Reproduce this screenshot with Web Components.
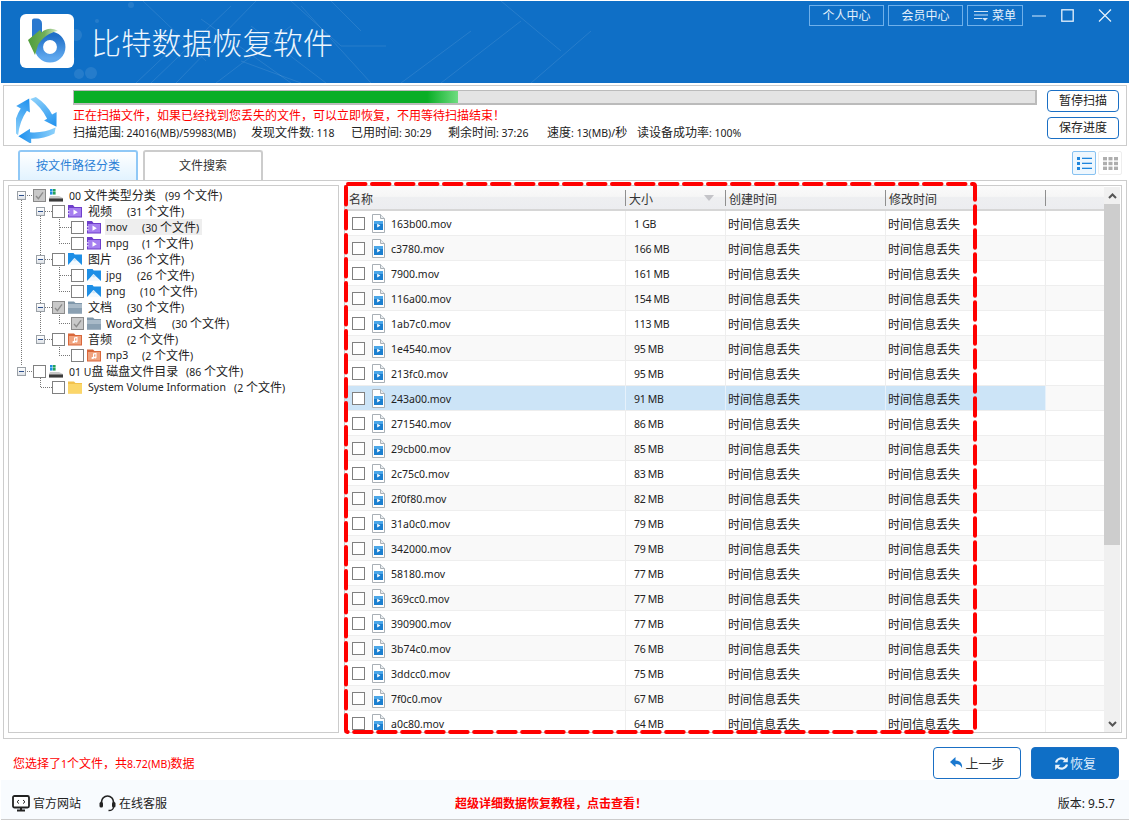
<!DOCTYPE html>
<html lang="zh">
<head>
<meta charset="utf-8">
<title>比特数据恢复软件</title>
<style>
html,body{margin:0;padding:0;background:#fff}
body{width:1130px;height:820px;overflow:hidden;font:12px/16px "Noto Sans","Noto Sans CJK SC",sans-serif;color:#222}
</style>
</head>
<body>
<bit-app></bit-app>
<script>
function def(name, html, opts){
  opts = opts || {};
  customElements.define(name, class extends HTMLElement{
    constructor(){super();this.attachShadow({mode:'open'}).innerHTML=html;}
    connectedCallback(){ if(opts.init) opts.init.call(this,this.shadowRoot); }
  });
}
const W = s => s.replace(/[\x00-\xff]+/g, m => `<span style="font-size:10.5px">${m}</span>`);
const I = {
  purple:`<svg viewBox="0 0 14 14" width="14" height="14"><path d="M0 1h5l1.5 2H14v10.5H0z" fill="#6f3fcb"/><rect x="1" y="4" width="12" height="8.5" fill="#a67ff0"/><rect x="0" y="6" width="1.6" height="1.4" fill="#d7c6f8"/><rect x="0" y="9" width="1.6" height="1.4" fill="#d7c6f8"/><path d="M5.5 5.6l4.3 2.6-4.3 2.6z" fill="#fff"/></svg>`,
  image:`<svg viewBox="0 0 14 14" width="14" height="14"><path d="M0 1h5.5l1.2 1.4H14V13H0z" fill="#1e8fe6"/><path d="M0 13l6.5-7 7.5 7z" fill="#f4fafe"/><path d="M6.5 6L9 8.7 6.6 9.6 4.6 8z" fill="#cfe6f8"/></svg>`,
  gray:`<svg viewBox="0 0 14 14" width="14" height="14"><path d="M0 1.5h6l1.5 1.5H14v10.5H0z" fill="#7f97aa"/><rect y="4" width="14" height="4" fill="#a9bac8"/><rect y="8" width="14" height="5.5" fill="#8aa0b2"/></svg>`,
  music:`<svg viewBox="0 0 14 14" width="14" height="14"><path d="M0 1.5h6L7.5 3H14v10.5H0z" fill="#d9673a"/><rect x="1" y="4" width="12" height="8.5" fill="#f0a37f"/><path d="M6 5.5l3.5-.7v4.7a1.3 1 0 1 1-1-1V6.2L7 6.5v3.6a1.3 1 0 1 1-1-1z" fill="#fff"/></svg>`,
  yellow:`<svg viewBox="0 0 14 14" width="14" height="14"><path d="M0 1.5h6L7.5 3H14v10.5H0z" fill="#f2c14c"/><rect y="4" width="14" height="9.5" fill="#fbd669"/></svg>`,
  drive:`<svg viewBox="0 0 14 14" width="14" height="14"><rect x="1" y="1" width="2.6" height="2.6" fill="#1d8fe0"/><rect x="4" y="1" width="2.6" height="2.6" fill="#25a25a"/><rect x="1" y="4" width="2.6" height="2.6" fill="#1d8fe0"/><rect x="4" y="4" width="2.6" height="2.6" fill="#25a25a"/><path d="M1 8h9l4 2v3.5H0V10z" fill="#c9c9c9"/><rect y="10.5" width="14" height="3" fill="#3b3b3b"/></svg>`,
  file:`<svg viewBox="0 0 13 19" width="13" height="19"><path d="M.5.5h8l4 4v14H.5z" fill="#fff" stroke="#a9b0b6"/><path d="M8.5.5v4h4" fill="#e8ecef" stroke="#a9b0b6"/><rect x="2" y="7" width="9" height="9" fill="#1a7fd0"/><rect x="2" y="7" width="9" height="3" fill="#4aa6e8"/><path d="M5.2 9.8l3.2 1.8-3.2 1.8z" fill="#fff"/></svg>`
};

def('check-box',`<style>
:host{display:block;width:13px;height:13px;box-sizing:border-box;border:1px solid #808080;background:#fff;flex:none;position:relative}
:host([checked]){background:#c9c9c9;border-color:#8a8a8a}
svg{display:none;position:absolute;left:0;top:0}
:host([checked]) svg{display:block}
</style><svg width="11" height="11" viewBox="0 0 11 11"><path d="M2 6l2.4 2.6L9 2.4" fill="none" stroke="#8c8c8c" stroke-width="1.4"/></svg>`);

def('tree-exp',`<style>
:host{display:block;width:9px;height:9px;box-sizing:border-box;border:1px solid #9aa0a6;background:linear-gradient(#fff,#dfe3e8);position:relative;flex:none}
i{position:absolute;left:1px;top:3px;width:5px;height:1px;background:#2c4f8c}
:host([blank]){visibility:hidden}
</style><i></i>`);

def('tree-row',`<style>
:host{display:flex;align-items:center;height:16px;white-space:nowrap}
tree-exp{margin-right:7px}
.ic{margin-left:3px;width:14px;height:14px;flex:none;display:block}
.ic svg{display:block}
.txt{display:flex;height:16px;line-height:18px;margin-left:6px}
:host([lv2]) .txt{margin-left:5px}
.name{flex:none}
:host([hl]) .txt{background:#eee;margin-left:4px;padding-left:1px;padding-right:3px}
</style><tree-exp></tree-exp><check-box></check-box><span class="ic"></span><span class="txt"><span class="name"></span><span class="cnt"></span></span>`,{init(r){
  const a=n=>this.getAttribute(n);
  this.style.paddingLeft=a('x')+'px';
  const e=r.querySelector('tree-exp');
  if(a('exp')==='none') {e.style.display='none';this.setAttribute('lv2','');}
  if(a('exp')==='blank') e.setAttribute('blank','');
  if(this.hasAttribute('checked')) r.querySelector('check-box').setAttribute('checked','');
  r.querySelector('.ic').innerHTML=I[a('icon')];
  const n=r.querySelector('.name');n.innerHTML=W(a('name'));n.style.width=a('w')+'px';
  if(/^[\x00-\xff]+$/.test(a('name'))) n.style.lineHeight='16px';
  r.querySelector('.cnt').innerHTML=W(a('cnt'));
}});

def('file-tree',`<style>
:host{display:block;position:relative;box-sizing:border-box;width:331px;height:548px;border:1px solid #ccc;padding-top:1px;background:#fff;flex:none;overflow:hidden}
svg{position:absolute;left:0;top:0;pointer-events:none}
</style>
<svg width="329" height="230"><g fill="none" stroke="#777" stroke-dasharray="1 1" shape-rendering="crispEdges" transform="translate(-9,-186)">
<path d="M21.5 200V366M27 195.5h6M27 371.5h6"/>
<path d="M40.5 216V334M45 211.5h7M45 259.5h7M45 307.5h7M45 339.5h7"/>
<path d="M59.5 217V243.5H71M59.5 227.5H71"/>
<path d="M59.5 265V291.5H71M59.5 275.5H71"/>
<path d="M59.5 313V323.5H71"/>
<path d="M59.5 345V355.5H71"/>
<path d="M40.5 376V387.5H52"/>
</g></svg>
<div id="r"></div>`,{init(r){
  const rows=[
   [8,'','drive','00 文件类型分类','(99 个文件)',96,1],
   [27,'','purple','视频','(31 个文件)',39],
   [46,'none','purple','mov','(30 个文件)',36,0,1],
   [46,'none','purple','mpg','(1 个文件)',36],
   [27,'','image','图片','(36 个文件)',39],
   [46,'none','image','jpg','(26 个文件)',31],
   [46,'none','image','png','(10 个文件)',34],
   [27,'','gray','文档','(30 个文件)',39,1],
   [46,'none','gray','Word文档','(30 个文件)',66,1],
   [27,'','music','音频','(2 个文件)',39],
   [46,'none','music','mp3','(2 个文件)',36],
   [8,'','drive','01 U盘 磁盘文件目录','(86 个文件)',117],
   [27,'blank','yellow','System Volume Information','(2 个文件)',146]
  ];
  r.getElementById('r').innerHTML=rows.map(d=>`<tree-row x="${d[1]==='none'?d[0]+16:d[0]}" exp="${d[1]}" icon="${d[2]}" name="${d[3]}" cnt="${d[4]}" w="${d[5]}"${d[6]?' checked':''}${d[7]?' hl':''}></tree-row>`).join('');
}});

const COLS='grid-template-columns:281px 100px 160px 160px 1fr';
def('file-row',`<style>
:host{display:grid;${COLS};height:25px;box-sizing:border-box;border-bottom:1px solid #eee;background:#fff;align-items:center;white-space:nowrap;flex:none}
:host([alt]){background:#f9f9f9}
:host([sel]){border-bottom-color:#eee}
div{height:24px;line-height:26px;box-sizing:border-box;border-right:1px solid #eee}
:host([sel]) div:not(.e){background:#cce4f7;border-right-color:#e6f1fb}
.n{display:flex;align-items:center;padding-left:7px}
.ic{margin-left:7px;width:13px;height:19px;display:block}
.ic svg{display:block}
.nm{margin:2px 0 0 6px;font-size:10.5px;line-height:20px}
.s{padding-left:8px;font-size:10.5px;letter-spacing:-.3px}
.t{padding-left:2px;line-height:28px}
.e{border:0}
</style><div class="n"><check-box></check-box><span class="ic"></span><span class="nm"></span></div><div class="s"></div><div class="t">时间信息丢失</div><div class="t">时间信息丢失</div><div class="e"></div>`,{init(r){
  r.querySelector('.nm').textContent=this.getAttribute('name');
  r.querySelector('.s').textContent=this.getAttribute('size');
  r.querySelector('.ic').innerHTML=I.file;
}});

def('scroll-bar',`<style>
:host{display:flex;flex-direction:column;width:16px;background:#f0f0f0;flex:none;margin:1px 1px 0 0}
.b{height:17px;display:flex;align-items:center;justify-content:center;flex:none;background:#f0f0f0}
.th{height:341px;background:#cdcdcd;flex:none}
.sp{flex:1}
</style><div class="b"><svg width="9" height="6" viewBox="0 0 9 6"><path d="M1 5l3.5-3.5L8 5" fill="none" stroke="#555" stroke-width="2"/></svg></div><div class="th"></div><div class="sp"></div><div class="b"><svg width="9" height="6" viewBox="0 0 9 6"><path d="M1 1l3.5 3.5L8 1" fill="none" stroke="#555" stroke-width="2"/></svg></div>`);

def('file-list',`<style>
:host{display:flex;box-sizing:border-box;width:778px;height:548px;border:1px solid #ccc;background:#fff;flex:none;overflow:hidden}
.m{width:759px;flex:none;display:flex;flex-direction:column;overflow:hidden}
.h{display:grid;${COLS};height:25px;box-sizing:border-box;border-bottom:2px solid #d6d6d6;background:linear-gradient(#fbfbfb 0,#f6f6f6 45%,#eeeff1 50%,#ecedf0 100%);flex:none;align-items:center}
.h span{display:block;height:16px;line-height:19px;border-right:1px solid #8f8f8f;padding-left:3px;position:relative;color:#333}
.h span.nb{padding-left:4px}
.h i{position:absolute;right:11px;top:5px;border:5px solid transparent;border-top:6px solid #c4c4c8;border-bottom:0}
</style><div class="m"><div class="h"><span class="nb">名称</span><span>大小<i></i></span><span>创建时间</span><span>修改时间</span><b></b></div><div id="b"></div></div><scroll-bar></scroll-bar>`,{init(r){
  const d='163b00 1 GB,c3780 166 MB,7900 161 MB,116a00 154 MB,1ab7c0 113 MB,1e4540 95 MB,213fc0 95 MB,243a00 91 MB,271540 86 MB,29cb00 85 MB,2c75c0 83 MB,2f0f80 82 MB,31a0c0 79 MB,342000 79 MB,58180 77 MB,369cc0 77 MB,390900 77 MB,3b74c0 76 MB,3ddcc0 75 MB,7f0c0 67 MB,a0c80 64 MB'.split(',');
  r.getElementById('b').innerHTML=d.map((s,i)=>{const k=s.indexOf(' ');return `<file-row name="${s.slice(0,k)}.mov" size="${s.slice(k+1)}"${i%2?' alt':''}${i===7?' sel':''}></file-row>`}).join('');
}});

def('main-panel',`<style>
:host{display:flex;position:relative;box-sizing:border-box;margin-left:3px;width:1124px;height:559px;border:1px solid #ccc;padding:4px 0 0 4px;gap:5px;background:#fff}
svg{position:absolute;left:-4px;top:-181px;pointer-events:none}
</style><slot></slot>
<svg width="1130" height="820"><rect x="346" y="184" width="629" height="548" rx="2" fill="none" stroke="#f00" stroke-width="4" stroke-linecap="round" stroke-dasharray="17.5 6.5"/></svg>`);

def('top-btn',`<style>
:host{display:flex;align-items:center;justify-content:center;gap:3px;box-sizing:border-box;height:21px;width:75px;border:1px solid #6fb0ea;color:#e6f2fc;font-size:12px;flex:none}
:host([w]){width:56px}
</style><slot></slot>`);

def('bit-header',`<style>
:host{display:flex;position:relative;overflow:hidden;box-sizing:border-box;margin:1px 1px 0;height:82px;background:#0f6fc6;color:#fff;padding:13px 0 0 19px}
.bg{position:absolute;left:0;top:0}
.logo{flex:none;position:relative}
h1{position:relative;margin:11px 0 0 17px;font-size:30px;line-height:36px;font-weight:300;letter-spacing:.3px;color:#eef6fd;white-space:nowrap}
.tools{position:absolute;right:0;top:4px;display:flex;gap:4px;padding-right:17px}
.ctl{display:flex;align-items:center;margin-left:5px;gap:15px}
.ctl svg{display:block}
</style>
<svg class="bg" width="1128" height="82"><g fill="#fff" opacity=".09"><circle cx="75" cy="34" r="6"/><circle cx="90" cy="72" r="6"/><circle cx="78" cy="73" r="5"/><circle cx="130" cy="4" r="3"/><circle cx="72" cy="58" r="2"/><circle cx="96" cy="20" r="2"/></g>
<g fill="none" stroke="#fff" opacity=".1"><path d="M135 82L190 30M150 82L230 5M175 82L255 0M215 82L290 25M240 60L300 82M250 25L325 82M142 0L205 60M200 18L290 82M290 0L340 45L385 45M300 5L370 82M330 0L360 30M400 82L470 30M440 82L520 20M500 0L560 50M530 82L590 30"/></g></svg>
<svg class="logo" width="54" height="54" viewBox="0 0 54 54"><defs><linearGradient id="lb" x1="0" y1="0" x2="0" y2="1"><stop offset="0" stop-color="#1f6fc8"/><stop offset="1" stop-color="#5fa8ee"/></linearGradient><linearGradient id="lg" x1="0" y1="0" x2="1" y2="0"><stop offset="0" stop-color="#4f9d3a"/><stop offset=".55" stop-color="#6fae58"/><stop offset="1" stop-color="#d6ebc9"/></linearGradient></defs>
<rect width="54" height="54" rx="6" fill="#fff"/><path d="M12 6.500a2 2 0 0 1 2-2h3a5 5 0 0 1 5 5v24H12z" fill="#2a78cf"/><circle cx="30" cy="33" r="11.200" fill="none" stroke="url(#lb)" stroke-width="8.500"/><path d="M38 17C32 13.500 26 14.500 21.500 18.500L20 16 8 26 15 41 18 31C22 24 30 18 38 17Z" fill="url(#lg)"/></svg>
<h1>比特数据恢复软件</h1>
<div class="tools"><top-btn>个人中心</top-btn><top-btn>会员中心</top-btn><top-btn w><svg width="15" height="13" viewBox="0 0 15 13"><path d="M0 2.5h14M0 6h14M0 9.5h8" stroke="#cfe4f7" stroke-width="1.2"/><path d="M8 9l3 3 3-3z" fill="#cfe4f7"/></svg>菜单</top-btn>
<div class="ctl"><svg width="14" height="12" viewBox="0 0 14 12"><path d="M0 6h14" stroke="#a9d0f2" stroke-width="1.3"/></svg><svg width="13" height="13" viewBox="0 0 13 13"><rect x=".8" y=".8" width="11.4" height="11.4" fill="none" stroke="#e8f3fc" stroke-width="1.3"/></svg><svg width="14" height="13" viewBox="0 0 14 13" style="margin-left:9px"><path d="M1 .5l12 12M13 .5l-12 12" stroke="#e8f3fc" stroke-width="1.2"/></svg></div></div>`);

def('side-btn',`<style>
:host{display:block;box-sizing:border-box;width:72px;height:22px;border:1px solid #1a6fc4;border-radius:4px;text-align:center;line-height:20px;font-size:12px;color:#222;background:#fff}
</style><slot></slot>`);

def('progress-bar',`<style>
:host{display:block;box-sizing:border-box;width:964px;height:15px;border:1px solid #bbb;border-width:1px 2px 2px 1px;background:#e4e4e4}
i{display:block;height:100%;width:384px;background:linear-gradient(90deg,#09ae26 0,#09ae26 92%,#6fdc80 100%)}
</style><i></i>`);

def('scan-panel',`<style>
:host{display:flex;box-sizing:border-box;margin:2px 0 4px 3px;width:1124px;height:61px;border:1px solid #ccc;background:#fff;padding:4px 0 0 12px}
.ic{flex:none;width:42px;height:46px;margin:7px 15px 0 0}
.mid{width:964px;flex:none}
.red{color:#f00;height:19px;line-height:21px;white-space:nowrap}
.st{display:flex;height:18px;line-height:18px;white-space:nowrap;color:#222}
.st span{flex:none}
.btns{display:flex;flex-direction:column;gap:5px;margin-left:10px}
</style>
<svg class="ic" viewBox="5 3 36 39"><defs><linearGradient id="rc" gradientUnits="userSpaceOnUse" x1="7" y1="0" x2="39" y2="0"><stop offset="0" stop-color="#1e90ee"/><stop offset="1" stop-color="#8fd2fb"/></linearGradient></defs>
<path id="p" fill="url(#rc)" d="M39 29L38 34Q28 39 18 38.500L18 43 7 36.500 17 30 17 33Q28 34 39 29Z"/>
<use href="#p" transform="rotate(120 21 23)"/><use href="#p" transform="rotate(240 21 23)"/></svg>
<div class="mid"><progress-bar></progress-bar>
<div class="red">正在扫描文件，如果已经找到您丢失的文件，可以立即恢复，不用等待扫描结束！</div>
<div class="st"><span style="width:178px">${W('扫描范围: 24016(MB)/59983(MB)')}</span><span style="width:100px">${W('发现文件数: 118')}</span><span style="width:97px">${W('已用时间: 30:29')}</span><span style="width:99px">${W('剩余时间: 37:26')}</span><span style="width:90px">${W('速度: 13(MB)/秒')}</span><span>${W('读设备成功率: 100%')}</span></div></div>
<div class="btns"><side-btn>暂停扫描</side-btn><side-btn>保存进度</side-btn></div>`);

def('tab-btn',`<style>
:host{display:block;box-sizing:border-box;width:120px;height:30px;border:2px solid #ccc;border-bottom:0;border-radius:3px 3px 0 0;text-align:center;line-height:28px;color:#333;background:#fff}
:host([on]){border-color:#90c8f6;color:#2b80d6;background:linear-gradient(#fff,#e2f3ff)}
</style><slot></slot>`);

def('view-btn',`<style>
:host{display:flex;align-items:center;justify-content:center;box-sizing:border-box;width:24px;height:24px;border:1px solid #eee;border-radius:2px;background:#fff}
:host([on]){border-color:#86c1f1;background:#eef7fe}
</style><slot></slot>`);

def('tab-bar',`<style>
:host{display:flex;height:30px;padding-left:18px;gap:5px;box-sizing:border-box;position:relative}
.v{display:flex;gap:2px;margin-left:auto;margin-right:8px;height:24px;margin-top:1px}
</style><tab-btn on>按文件路径分类</tab-btn><tab-btn>文件搜索</tab-btn>
<div class="v"><view-btn on><svg width="15" height="13" viewBox="0 0 15 13" fill="#1f86dd"><rect width="3" height="3"/><rect y="5" width="3" height="3"/><rect y="10" width="3" height="3"/><rect x="5" y=".7" width="10" height="1.3"/><rect x="5" y="5.7" width="10" height="1.3"/><rect x="5" y="10.7" width="10" height="1.3"/></svg></view-btn><view-btn><svg width="15" height="13" viewBox="0 0 15 13" fill="#aeaeae"><rect width="4" height="3.4"/><rect x="5.500" width="4" height="3.4"/><rect x="11" width="4" height="3.4"/><rect y="4.8" width="4" height="3.4"/><rect x="5.500" y="4.8" width="4" height="3.4"/><rect x="11" y="4.8" width="4" height="3.4"/><rect y="9.6" width="4" height="3.4"/><rect x="5.500" y="9.6" width="4" height="3.4"/><rect x="11" y="9.6" width="4" height="3.4"/></svg></view-btn></div>`);

def('act-btn',`<style>
:host{display:flex;align-items:center;justify-content:center;gap:1px;box-sizing:border-box;width:88px;height:32px;border:1px solid #1a6fc4;border-radius:4px;background:#fff;color:#333;font-size:13px}
:host([fill]){background:#0f6fc6;color:#dbeafa}
svg{display:block}
</style><slot></slot>`);

def('status-row',`<style>
:host{display:flex;align-items:flex-start;height:41px;padding:8px 11px 0 13px;box-sizing:border-box}
.t{color:#f00;margin-top:9px}
.b{display:flex;gap:10px;margin-left:auto}
</style><span class="t">${W('您选择了1个文件，共8.72(MB)数据')}</span><div class="b"><act-btn><svg width="15" height="14" viewBox="0 0 15 14"><path d="M6.500 1L1 6l5.500 5V8c3 0 5 .8 6.500 4 .6-4.500-1.800-7.500-6.500-7.500z" fill="#1a78cf"/></svg>上一步</act-btn><act-btn fill><svg width="15" height="15" viewBox="0 0 15 15"><g fill="none" stroke="#e6f1fb" stroke-width="2.2"><path d="M2 6.500a5.600 5.600 0 0 1 9.600-2.200"/><path d="M13 8.500a5.600 5.600 0 0 1-9.600 2.200"/></g><path d="M13.800 1v5.200H8.600zM1.200 14V8.800h5.200z" fill="#e6f1fb"/></svg>恢复</act-btn></div>`);

def('app-footer',`<style>
:host{display:flex;align-items:center;position:relative;box-sizing:border-box;height:40px;margin:0 1px;border-bottom:1px solid #ccc;background:#f8fbfe;color:#222;padding:8px 0 0 11px;white-space:nowrap}
.l{display:flex;align-items:center;gap:3px}
.l svg{display:block}
.c{color:#f00;font-weight:700;position:absolute;left:454px;top:16px;font-size:12px}
.v{margin-left:auto;margin-right:14px}
</style>
<span class="l"><svg width="18" height="17" viewBox="0 0 18 17"><rect x="1" y="1" width="16" height="11.5" rx="1.5" fill="#fff" stroke="#222" stroke-width="1.8"/><path d="M7 5L5 6.8 7 8.6M11 5l2 1.8L11 8.6" fill="none" stroke="#222"/><path d="M5 15.5h8M9 13v2" stroke="#222" stroke-width="2"/></svg>官方网站</span>
<span class="l" style="margin-left:18px"><svg width="17" height="17" viewBox="0 0 17 17"><path d="M2.5 9V7a6 6 0 0 1 12 0v2" fill="none" stroke="#222" stroke-width="1.7"/><rect x="0.5" y="7" width="3.5" height="5.5" rx="1.5" fill="#222"/><rect x="13" y="7" width="3.5" height="5.5" rx="1.5" fill="#222"/><path d="M14.5 12c0 2.5-2 3.5-5 3.5" fill="none" stroke="#222" stroke-width="1.3"/></svg>在线客服</span>
<span class="c">超级详细数据恢复教程，点击查看！</span>
<span class="v">版本: 9.5.7</span>`);

def('bit-app',`<style>
:host{display:block;width:1130px;height:820px;overflow:hidden}
</style>
<bit-header></bit-header><scan-panel></scan-panel><tab-bar></tab-bar>
<main-panel><file-tree></file-tree><file-list></file-list></main-panel>
<status-row></status-row><app-footer></app-footer>`);
</script>
</body>
</html>
